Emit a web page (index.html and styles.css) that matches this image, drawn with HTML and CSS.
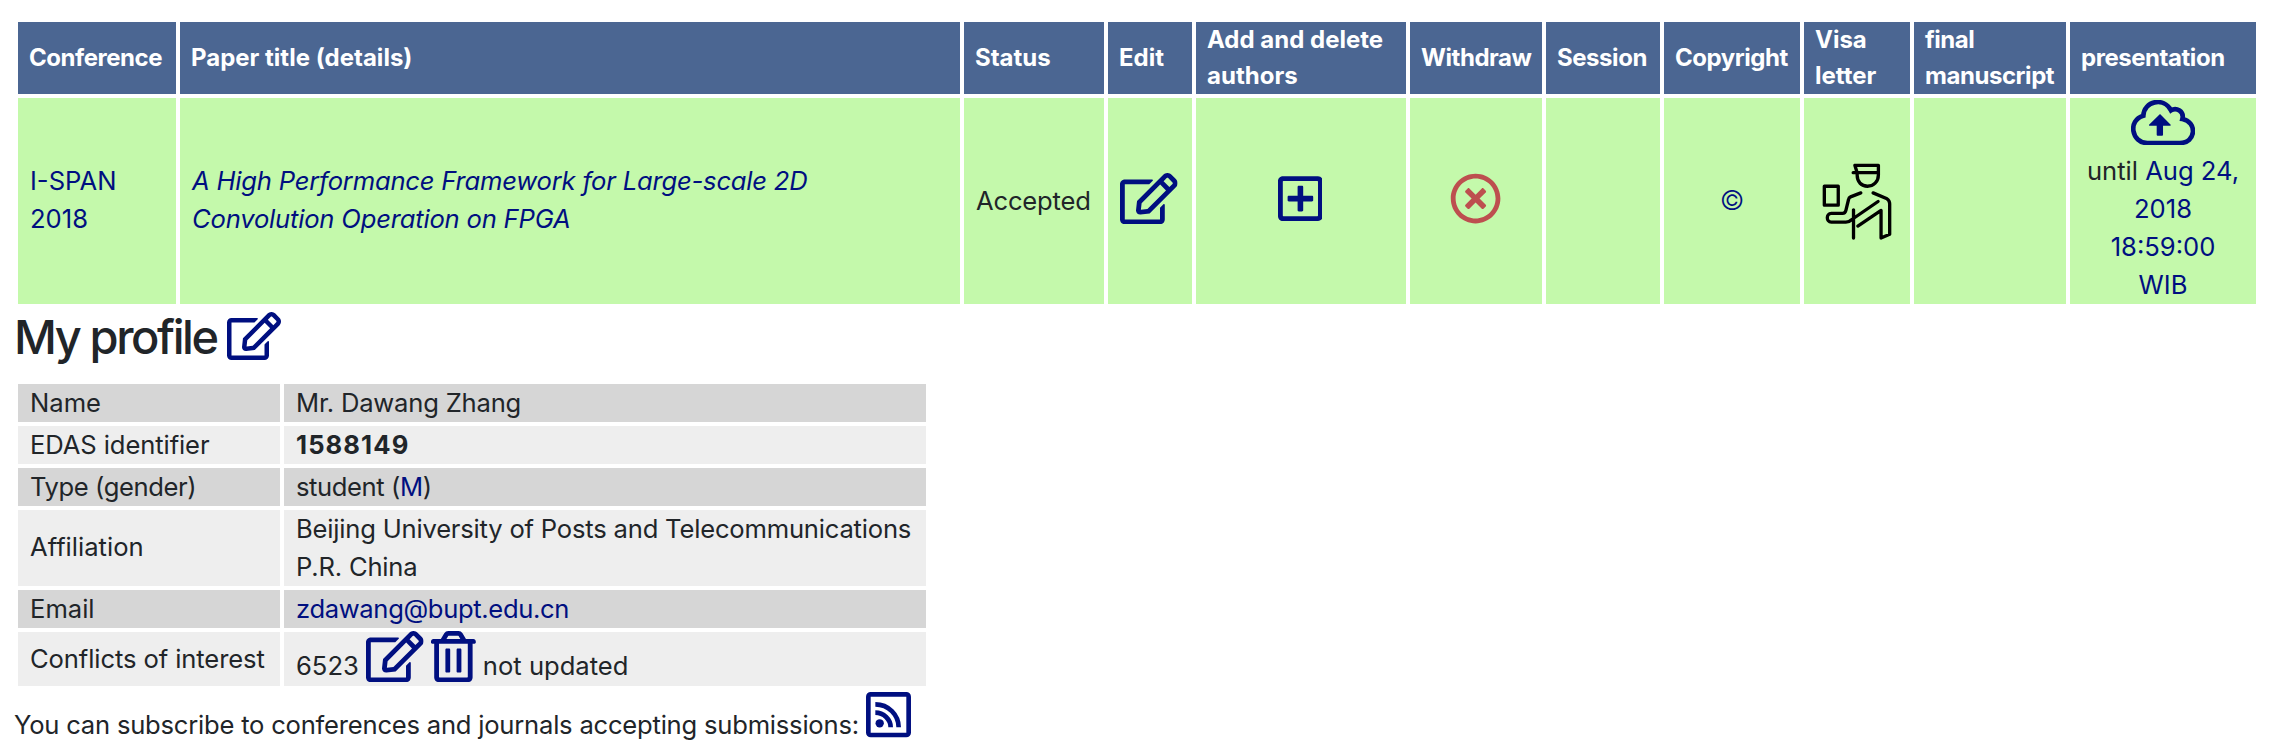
FILE: index.html
```html
<!DOCTYPE html>
<html lang="en">
<head>
<meta charset="utf-8">
<title>My profile</title>
<link rel="stylesheet" href="styles.css">
</head>
<body>
<svg class="defs" aria-hidden="true">
<symbol id="edit" viewBox="0 0 576 512"><path d="M402.3 344.9l32-32c5-5 13.7-1.5 13.7 5.7V464c0 26.5-21.5 48-48 48H48c-26.5 0-48-21.5-48-48V112c0-26.5 21.5-48 48-48h273.5c7.1 0 10.7 8.6 5.7 13.7l-32 32c-1.5 1.5-3.5 2.3-5.7 2.3H48v352h352V350.5c0-2.1.8-4.1 2.3-5.6zm156.6-201.8L296.3 405.7l-90.4 10c-26.2 2.9-48.5-19.2-45.6-45.6l10-90.4L432.9 17.1c22.9-22.9 59.9-22.9 82.7 0l43.2 43.2c22.9 22.9 22.9 60 .1 82.8zM460.1 174L402 115.9 216.2 301.8l-7.3 65.3 65.3-7.3L460.1 174zm64.8-79.7l-43.2-43.2c-4.1-4.1-10.8-4.1-14.8 0L436 82l58.1 58.1 30.9-30.9c4-4.2 4-10.8-.1-14.9z"/></symbol>
</svg>
<table class="papers">
<colgroup><col class="c-conf"><col class="c-title"><col class="c-status"><col class="c-edit"><col class="c-auth"><col class="c-with"><col class="c-sess"><col class="c-copy"><col class="c-visa"><col class="c-final"><col class="c-pres"></colgroup>
<thead><tr><th class="tight">Conference</th><th>Paper title (details)</th><th>Status</th><th>Edit</th><th>Add and delete<br>authors</th><th class="tight">Withdraw</th><th class="tight">Session</th><th class="tight">Copyright</th><th>Visa<br>letter</th><th class="tight">final<br>manuscript</th><th class="tight">presentation</th></tr></thead>
<tbody><tr>
<td class="raised"><a href="#">I-SPAN<br>2018</a></td>
<td class="long raised"><a href="#"><i>A High Performance Framework for Large-scale 2D<br>Convolution Operation on FPGA</i></a></td>
<td class="long">Accepted</td>
<td><a href="#"><svg class="icon block wide"><use href="#edit"/></svg></a></td>
<td class="add"><a href="#"><svg class="icon block narrow" viewBox="0 0 448 512"><path d="M352 240v32c0 6.600-5.400 12-12 12h-88v88c0 6.600-5.400 12-12 12h-32c-6.600 0-12-5.400-12-12v-88h-88c-6.600 0-12-5.400-12-12v-32c0-6.600 5.400-12 12-12h88v-88c0-6.600 5.400-12 12-12h32c6.600 0 12 5.400 12 12v88h88c6.600 0 12 5.400 12 12zm96-160v352c0 26.500-21.500 48-48 48H48c-26.500 0-48-21.500-48-48V80c0-26.500 21.500-48 48-48h352c26.500 0 48 21.500 48 48zm-48 346V86c0-3.300-2.700-6-6-6H54c-3.300 0-6 2.700-6 6v340c0 3.300 2.700 6 6 6h340c3.300 0 6-2.700 6-6z"/></svg></a></td>
<td><a class="danger" href="#"><svg class="icon block square" viewBox="0 0 512 512"><path d="M256 8C119 8 8 119 8 256s111 248 248 248 248-111 248-248S393 8 256 8zm0 448c-110.500 0-200-89.500-200-200S145.500 56 256 56s200 89.500 200 200-89.500 200-200 200zm101.800-262.200L295.600 256l62.200 62.200c4.700 4.700 4.700 12.300 0 17l-22.600 22.600c-4.700 4.700-12.300 4.700-17 0L256 295.600l-62.200 62.200c-4.700 4.700-12.300 4.700-17 0l-22.600-22.600c-4.700-4.700-4.700-12.300 0-17l62.200-62.200-62.200-62.200c-4.700-4.700-4.700-12.300 0-17l22.600-22.600c4.700-4.700 12.300-4.700 17 0l62.200 62.200 62.200-62.200c4.700-4.700 12.300-4.700 17 0l22.600 22.600c4.700 4.700 4.700 12.300 0 17z"/></svg></a></td>
<td></td>
<td class="center"><a class="copy" href="#">©</a></td>
<td><svg class="officer" viewBox="66 69 211 232"><path d="M165 76H236V104C236 126 221 139 203 139C185 139 172 126 172 106V98L165 76M160 98H236M73 139H115V196H73ZM183 159L152 171Q147 173 146 179L138 212Q136 221 128 221H94C78 221 78 247 94 247H138Q148 247 155 240L235 185M161 210V295M174 259L244 212V295L270 284V192Q270 182 262 177L220 159"/></svg></td>
<td></td>
<td class="center"><a href="#"><svg class="cloud" viewBox="1051 300 193 136"><path class="line" d="M1100 429H1197C1247 429 1250 365 1205 357C1211 334 1187 321 1171 331C1149 290 1090 303 1088 347C1040 361 1053 429 1100 429Z"/><path class="arrow" d="M1138 342L1170 374Q1171 377 1168 377H1147V404Q1147 407 1144 407H1131Q1128 407 1128 404V377H1107Q1104 377 1105 374Z"/></svg></a>until <a href="#">Aug 24,<br>2018<br>18:59:00<br>WIB</a></td>
</tr></tbody>
</table>
<h2><span>My profile</span> <a href="#"><svg class="icon heading-icon"><use href="#edit"/></svg></a></h2>
<table class="profile">
<colgroup><col class="c-label"><col class="c-value"></colgroup>
<tbody>
<tr><td>Name</td><td class="long">Mr. Dawang Zhang</td></tr>
<tr><td class="slight">EDAS identifier</td><td><b>1588149</b></td></tr>
<tr><td class="gender">Type (gender)</td><td class="gender">student (<a href="#">M</a>)</td></tr>
<tr><td class="raised">Affiliation</td><td class="long">Beijing University of Posts and Telecommunications<br>P.R. China</td></tr>
<tr><td>Email</td><td class="mail"><a href="#">zdawang@bupt.edu.cn</a></td></tr>
<tr class="conflicts"><td class="slight">Conflicts of interest</td><td>6523 <a href="#"><svg class="icon wide"><use href="#edit"/></svg></a> <a href="#"><svg class="icon narrow" viewBox="0 0 448 512"><path d="M192 188v216c0 6.627-5.373 12-12 12h-24c-6.627 0-12-5.373-12-12V188c0-6.627 5.373-12 12-12h24c6.627 0 12 5.373 12 12zm100-12h-24c-6.627 0-12 5.373-12 12v216c0 6.627 5.373 12 12 12h24c6.627 0 12-5.373 12-12V188c0-6.627-5.373-12-12-12zm132-96c13.255 0 24 10.745 24 24v12c0 6.627-5.373 12-12 12h-20v336c0 26.510-21.490 48-48 48H80c-26.510 0-48-21.490-48-48V128H12c-6.627 0-12-5.373-12-12v-12c0-13.255 10.745-24 24-24h74.411l34.018-56.696A48 48 0 0 1 173.589 0h100.823a48 48 0 0 1 41.160 23.304L349.589 80H424zm-269.611 0h139.223L276.160 50.913A6 6 0 0 0 271.015 48h-94.028a6 6 0 0 0-5.145 2.913L154.389 80zM368 128H80v330a6 6 0 0 0 6 6h276a6 6 0 0 0 6-6V128z"/></svg></a> not updated</td></tr>
</tbody>
</table>
<p class="subscribe"><span>You can subscribe to conferences and journals accepting submissions:</span> <a href="#"><svg class="rss" viewBox="0 0 135 136"><rect class="line" x="7" y="7" width="121" height="122" rx="7"/><path class="line" d="M28 37C67 37 98 68 98 106M28 62C53 62 74 82 74 106"/><circle cx="41" cy="94" r="12.500"/></svg></a></p>
</body>
</html>
```
FILE: styles.css
```css
body {
  margin: 0;
  padding: 18px 14px 0;
  background: #fff;
  color: #212529;
  font: 25.6px/38px Inter, "Liberation Sans", sans-serif;
}
a { color: #000f80; text-decoration: none; }
.defs { display: none; }
table { table-layout: fixed; border-collapse: separate; border-spacing: 4px; }
th, td { padding: 0 12px; text-align: left; vertical-align: middle; white-space: nowrap; }
.papers { width: 2246px; }
.papers th {
  height: 72px;
  padding-left: 11px;
  background: #4b6692;
  color: #fff;
  font-size: 24px;
  font-weight: 650;
  line-height: 36px;
}
.papers .tight { letter-spacing: -0.45px; }
.papers td { height: 206px; background: #c4f9ab; }
.papers .raised { padding-bottom: 2px; height: 204px; }
.papers .add { padding-right: 14px; }
.c-conf { width: 158px; }
.c-title { width: 780px; }
.c-status { width: 140px; }
.c-edit { width: 84px; }
.c-auth { width: 210px; }
.c-with { width: 132px; }
.c-sess { width: 114px; }
.c-copy { width: 136px; }
.c-visa { width: 106px; }
.c-final { width: 152px; }
.c-pres { width: 186px; }
.center { text-align: center; }
.long { letter-spacing: -0.2px; }
.slight { letter-spacing: -0.1px; }
.gender { letter-spacing: -0.4px; }
.mail { letter-spacing: -0.35px; }
.copy { font-size: 27px; font-weight: 300; }
b { letter-spacing: 1.1px; }
.icon { height: 51.2px; fill: #000f80; vertical-align: -8px; }
.wide { width: 57.6px; }
.narrow { width: 44.8px; }
.square { width: 51.2px; }
.block { display: block; margin: 0 auto 5px; }
.papers .wide { margin-left: 0; }
.danger .icon { fill: #bd4f4f; }
.officer { display: block; width: 70px; height: 77px; margin-left: 6px; }
.officer path { fill: none; stroke: #000; stroke-width: 10; stroke-linecap: round; stroke-linejoin: round; }
.line { fill: none; stroke: #000f80; stroke-width: 14; }
.cloud { display: block; width: 64.4px; height: 45.4px; margin: 2px auto 7px; fill: #000f80; }
h2 { margin: 2px 0 16px; height: 54px; font-size: 47px; font-weight: 500; line-height: 54px; letter-spacing: -2.4px; }
.heading-icon { width: 54px; height: 48px; vertical-align: -6px; }
.profile { width: 916px; }
.c-label { width: 262px; }
.c-value { width: 642px; }
.profile tr:nth-child(odd) td { background: #d6d6d6; }
.profile tr:nth-child(even) td { background: #eee; }
.profile td { height: 38px; }
.profile .raised { padding-bottom: 2px; }
.profile .conflicts td { height: 54px; }
.conflicts .icon { margin: -2px 0 1px; vertical-align: -8px; }
.subscribe { margin: 2px 0 0; letter-spacing: -0.22px; }
.rss { width: 45px; height: 45.3px; vertical-align: -3px; fill: #000f80; }
```
